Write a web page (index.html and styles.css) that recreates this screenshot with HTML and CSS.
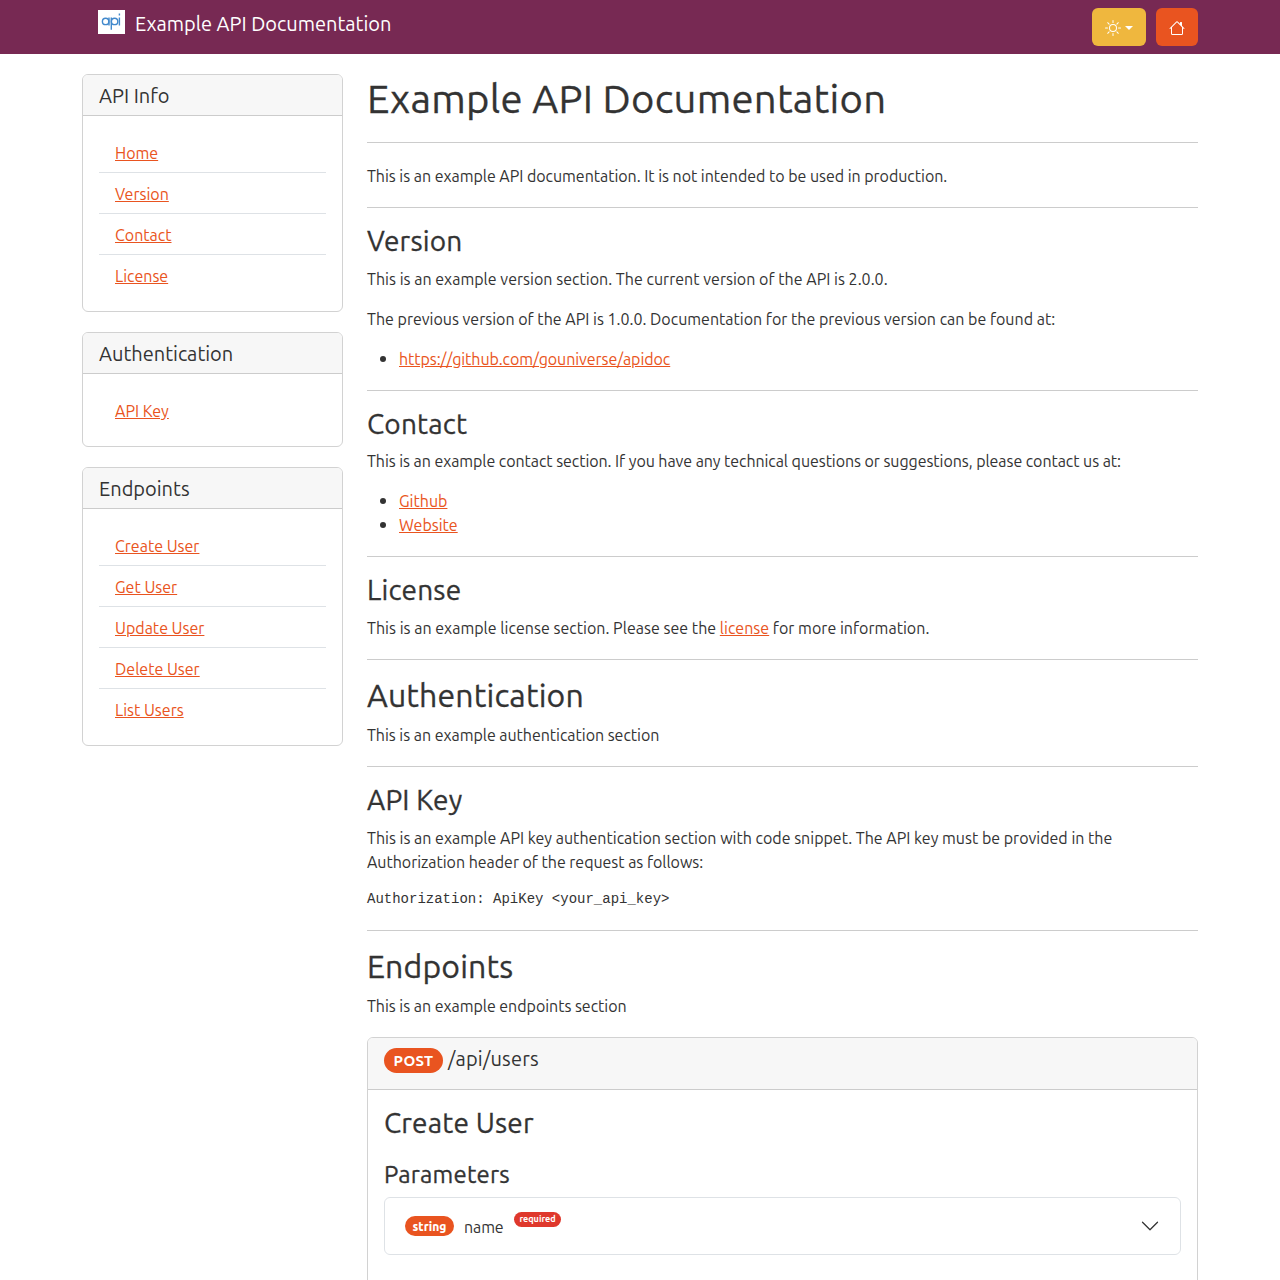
FILE: index.html
```html
<!DOCTYPE html>
<html lang="en">
<head>
<meta charset="utf-8">
<title>Example API Documentation</title>
<link rel="stylesheet" href="styles.css">
</head>
<body>
<nav class="navbar">
  <div class="container navbar-inner">
    <a class="brand" href="#">
      <svg class="logo" width="27" height="24" viewBox="0 0 27 24"><rect width="27" height="24" fill="#fff"/><g fill="none" stroke="#4289cc" stroke-width="1.4"><circle cx="7.6" cy="11.4" r="3.2"/><path d="M11 7.5v7.9M13.3 7.5v12.2"/><circle cx="16.6" cy="11.4" r="3.2"/><path d="M21.4 7.5v7.9M21.4 3.6v1.8"/></g></svg>
      <span class="brand-text">Example API Documentation</span>
    </a>
    <div class="actions">
      <button class="btn btn-warning">
        <svg width="16" height="16" viewBox="0 0 16 16" fill="currentColor"><path d="M8 11a3 3 0 1 1 0-6 3 3 0 0 1 0 6m0 1a4 4 0 1 0 0-8 4 4 0 0 0 0 8M8 0a.5.5 0 0 1 .5.5v2a.5.5 0 0 1-1 0v-2A.5.5 0 0 1 8 0m0 13a.5.5 0 0 1 .5.5v2a.5.5 0 0 1-1 0v-2A.5.5 0 0 1 8 13m8-5a.5.5 0 0 1-.5.5h-2a.5.5 0 0 1 0-1h2a.5.5 0 0 1 .5.5M3 8a.5.5 0 0 1-.5.5h-2a.5.5 0 0 1 0-1h2A.5.5 0 0 1 3 8m10.657-5.657a.5.5 0 0 1 0 .707l-1.414 1.415a.5.5 0 1 1-.707-.708l1.414-1.414a.5.5 0 0 1 .707 0m-9.193 9.193a.5.5 0 0 1 0 .707L3.05 13.657a.5.5 0 0 1-.707-.707l1.414-1.414a.5.5 0 0 1 .707 0m9.193 2.121a.5.5 0 0 1-.707 0l-1.414-1.414a.5.5 0 0 1 .707-.707l1.414 1.414a.5.5 0 0 1 0 .707M4.464 4.465a.5.5 0 0 1-.707 0L2.343 3.05a.5.5 0 1 1 .707-.707l1.414 1.414a.5.5 0 0 1 0 .708"/></svg>
        <span class="caret"></span>
      </button>
      <a class="btn btn-primary" href="#">
        <svg width="16" height="16" viewBox="0 0 16 16" fill="currentColor"><path d="M8.707 1.5a1 1 0 0 0-1.414 0L.646 8.146a.5.5 0 0 0 .708.708L2 8.207V13.5A1.5 1.5 0 0 0 3.5 15h9a1.5 1.5 0 0 0 1.5-1.5V8.207l.646.647a.5.5 0 0 0 .708-.708L13 5.793V2.5a.5.5 0 0 0-.5-.5h-1a.5.5 0 0 0-.5.5v1.293zM13 7.207V13.5a.5.5 0 0 1-.5.5h-9a.5.5 0 0 1-.5-.5V7.207l5-5z"/></svg>
      </a>
    </div>
  </div>
</nav>
<div class="container layout">
  <aside class="sidebar">
    <section class="card">
      <div class="card-header"><h5>API Info</h5></div>
      <ul class="menu"><li><a href="#">Home</a></li><li><a href="#">Version</a></li><li><a href="#">Contact</a></li><li><a href="#">License</a></li></ul>
    </section>
    <section class="card">
      <div class="card-header"><h5>Authentication</h5></div>
      <ul class="menu"><li><a href="#">API Key</a></li></ul>
    </section>
    <section class="card">
      <div class="card-header"><h5>Endpoints</h5></div>
      <ul class="menu"><li><a href="#">Create User</a></li><li><a href="#">Get User</a></li><li><a href="#">Update User</a></li><li><a href="#">Delete User</a></li><li><a href="#">List Users</a></li></ul>
    </section>
  </aside>
  <main class="content">
    <h1>Example API Documentation</h1>
    <hr>
    <p class="intro tight">This is an example API documentation. It is not intended to be used in production.</p>
    <hr>
    <h3>Version</h3>
    <p class="loose">This is an example version section. The current version of the API is 2.0.0.</p>
    <p>The previous version of the API is 1.0.0. Documentation for the previous version can be found at:</p>
    <ul><li><a class="tighter" href="#">https://github.com/gouniverse/apidoc</a></li></ul>
    <hr>
    <h3>Contact</h3>
    <p class="tighter">This is an example contact section. If you have any technical questions or suggestions, please contact us at:</p>
    <ul><li><a href="#">Github</a></li><li><a href="#">Website</a></li></ul>
    <hr>
    <h3>License</h3>
    <p class="loose">This is an example license section. Please see the <a href="#">license</a> for more information.</p>
    <hr>
    <h2>Authentication</h2>
    <p class="tight">This is an example authentication section</p>
    <hr>
    <h3>API Key</h3>
    <p>This is an example API key authentication section with code snippet. The API key must be provided in the<br><span class="tight">Authorization header of the request as follows:</span></p>
    <pre>Authorization: ApiKey &lt;your_api_key&gt;</pre>
    <hr>
    <h2>Endpoints</h2>
    <p class="tight">This is an example endpoints section</p>
    <section class="card endpoint">
      <div class="card-header endpoint-header"><span class="badge method">POST</span><h5>/api/users</h5></div>
      <div class="card-body">
        <h3>Create User</h3>
        <h4>Parameters</h4>
        <div class="param">
          <span class="badge type">string</span>
          <span class="param-name">name</span>
          <span class="badge required">required</span>
          <svg class="chevron" width="20" height="20" viewBox="0 0 16 16" fill="none" stroke="#333" stroke-linecap="round" stroke-linejoin="round"><path d="m2 5 6 6 6-6"/></svg>
        </div>
      </div>
    </section>
  </main>
</div>
</body>
</html>
```
FILE: styles.css
```css
* { box-sizing: border-box; }
html { overflow: hidden; }
body { margin: 0; height: 1280px; overflow: hidden; background: #fff; color: #333; font: 16px/24px Ubuntu, "Noto Sans", sans-serif; }
h1, h2, h3, h4, h5, p, ul { margin: 0; font-weight: 400; }
h1, h2, h3, h4 { -webkit-text-stroke: 0.3px #333; }
h1 { height: 48px; padding-top: 1px; font-size: 40px; line-height: 48px; letter-spacing: 0.26px; }
h2 { font-size: 32px; line-height: 38.4px; margin-bottom: 8px; letter-spacing: 0.15px; }
h3 { font-size: 28px; line-height: 33.6px; margin-bottom: 8px; letter-spacing: 0.18px; }
h4 { font-size: 24px; line-height: 28.8px; margin-bottom: 8px; letter-spacing: 0.18px; }
h5 { font-size: 20px; line-height: 24px; }
a { color: #e95420; text-decoration: underline; }
.tight { letter-spacing: -0.035px; }
.tighter { letter-spacing: -0.06px; }
.loose { letter-spacing: 0.02px; }
.container { width: 1140px; margin: 0 auto; padding: 0 12px; }
.navbar { background: #772953; height: 54px; }
.navbar-inner { display: flex; justify-content: space-between; padding: 8px 12px; }
.brand { display: flex; align-items: flex-start; gap: 10px; margin-left: 16px; color: #fff; text-decoration: none; }
.logo { margin-top: 2px; }
.brand-text { font-size: 20px; line-height: 32px; }
.actions { display: flex; gap: 10px; }
.btn { display: flex; align-items: center; gap: 4px; height: 38px; padding: 2px 13px 0; border: 0; border-radius: 6px; color: #fff; }
.btn-warning { background: #efb73e; width: 54px; }
.btn-primary { background: #e95420; width: 42px; }
.caret { border-top: 4.8px solid #fff; border-left: 4.8px solid transparent; border-right: 4.8px solid transparent; }
.layout { display: flex; gap: 24px; padding-top: 20px; }
.sidebar { width: 261px; display: flex; flex-direction: column; gap: 20px; }
.content { width: 831px; }
.card { border: 1px solid #d2d2d2; border-radius: 6px; overflow: hidden; }
.card-header { background: #f7f7f7; border-bottom: 1px solid #ccc; padding: 9px 16px 7px; }
.menu { list-style: none; padding: 16px; }
.menu li { padding: 9px 16px 7px; border-bottom: 1px solid #dee2e6; }
.menu li:last-child { border-bottom: 0; }
hr { border: 0; border-top: 1px solid #ccc; margin: 19px 0 16px; }
h1 + hr, pre + hr { margin-top: 20px; }
p { padding-top: 1px; margin-bottom: 15px; }
.content .intro { margin-top: 20px; }
.content > ul { padding: 0 0 1px 32px; }
.content > ul li { height: 24px; }
.content > ul li::marker { font-size: 19px; }
pre { margin: 0; font: 14px/21px "Liberation Mono", monospace; }
.endpoint { margin-top: 19px; height: 300px; }
.endpoint-header { display: flex; align-items: flex-start; gap: 5px; height: 52px; }
.endpoint-header h5 { letter-spacing: 0.2px; }
.badge { display: flex; align-items: center; justify-content: center; border-radius: 20px; background: #e95420; color: #fff; font-weight: 700; line-height: 1; }
.method { width: 59px; height: 25px; margin-top: 1px; font-size: 15px; letter-spacing: 0.3px; }
.card-body { padding: 16px; }
.card-body h3 { margin-bottom: 20px; }
.card-body h4 { padding-top: 1px; margin-bottom: 7px; }
.param { display: flex; align-items: center; height: 58px; padding: 0 20px; border: 1px solid #dee2e6; border-radius: 6px; }
.type { width: 49px; height: 20px; padding-top: 2px; font-size: 12px; font-weight: 800; }
.param-name { margin-left: 10px; width: 40px; padding-top: 2px; letter-spacing: -0.1px; }
.required { width: 47px; height: 15px; margin: -13px 0 0 10px; padding-top: 1px; background: #df382c; font-size: 9px; }
.chevron { margin-left: auto; }
```
